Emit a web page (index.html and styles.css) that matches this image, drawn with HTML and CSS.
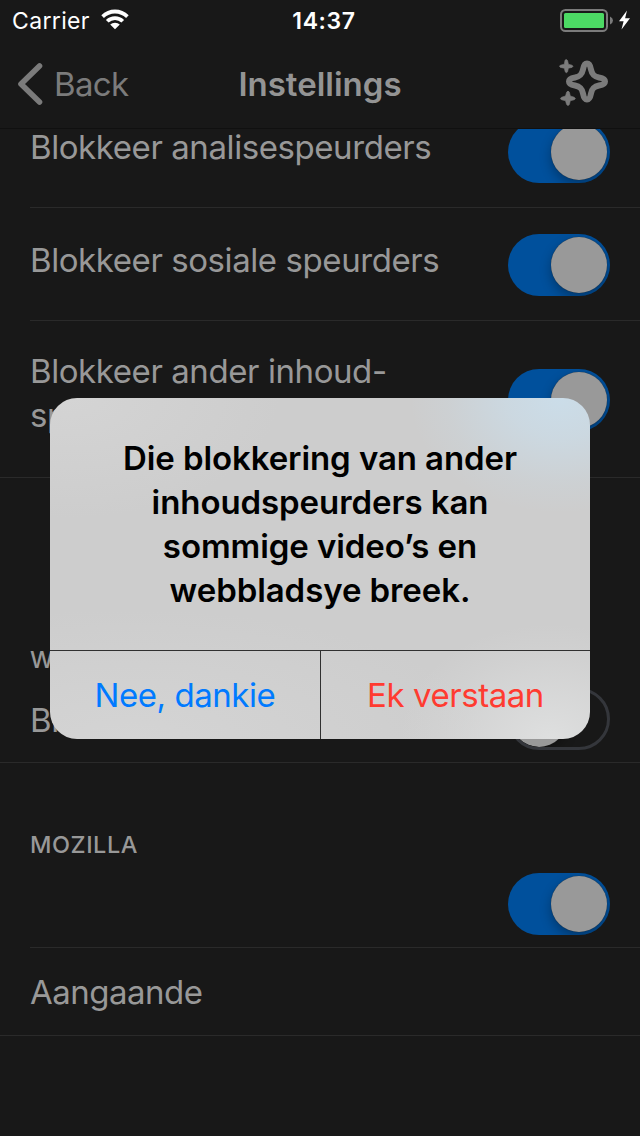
FILE: index.html
```html
<!DOCTYPE html>
<html lang="af">
<head>
<meta charset="utf-8">
<title>Instellings</title>
<link rel="stylesheet" href="styles.css">
</head>
<body>
<div class="screen">
  <div class="status">
    <div class="status-left">
      <span class="carrier">Carrier</span>
      <svg class="wifi" width="28" height="21" viewBox="0 0 28 21">
        <path d="M0.3 6.2A19.6 19.6 0 0 1 27.7 6.2L25.1 8.9A15.9 15.9 0 0 0 2.9 8.9ZM4.9 10.9A13 13 0 0 1 23.1 10.9L20.4 13.6A9.2 9.2 0 0 0 7.6 13.6ZM9.2 15.6A6.9 6.9 0 0 1 18.8 15.6L14 20.3Z" fill="#fff"/>
      </svg>
    </div>
    <span class="time">14:37</span>
    <svg class="battery" width="72" height="24" viewBox="0 0 72 24">
      <rect x="1" y="2" width="46" height="21" rx="4.5" fill="none" stroke="#7b7b7b" stroke-width="2"/>
      <rect x="4" y="5" width="40" height="15" rx="1.5" fill="#4cd964"/>
      <path d="M50 8.5Q53 10 53 12.5T50 16.5Z" fill="#7b7b7b"/>
      <path d="M67 2.5L59 13.2H63.6L61.5 21.5L70 10.2H65.1Z" fill="#fff"/>
    </svg>
  </div>
  <div class="nav">
    <div class="back">
      <svg width="26" height="44" viewBox="0 0 26 44"><path d="M22.500 4L4 22L22.500 40" fill="none" stroke="#7b7b7b" stroke-width="5.600" stroke-linecap="round" stroke-linejoin="round"/></svg>
      <span>Back</span>
    </div>
    <span class="title">Instellings</span>
    <svg class="sparkle" width="50" height="50" viewBox="0 0 50 50">
      <path d="M28 6.500C30.600 6.500 31.300 8.600 32 12.500C33 17.500 35 19.500 40 20.500C44 21.200 46 22 46 24.500S44 27.800 40 28.500C35 29.500 33 31.500 32 36.500C31.300 40.400 30.600 42.500 28 42.500S24.700 40.400 24 36.500C23 31.500 21 29.500 16 28.500C12 27.800 10 27 10 24.500S12 21.200 16 20.500C21 19.500 23 17.500 24 12.500C24.700 8.600 25.400 6.500 28 6.500Z" fill="none" stroke="#7b7b7b" stroke-width="6"/>
      <path d="M6 3.200Q7.500 1.600 8.600 3.600L9.400 7.200L13 8.200Q15 9.300 13 10.400L9.400 11.200L8.600 14.800Q7.400 16.600 6.200 14.800L5.300 11.200L1.400 10.400Q-.5 9.300 1.400 8.200L5.300 7.200Z" fill="#7b7b7b" stroke="#7b7b7b" stroke-width=".6"/>
      <path d="M7.600 35.200Q9 33 10.400 35.200L11.300 39L15.200 40.200Q17.500 41.500 15.200 42.800L11.300 43.700L10.400 47.500Q9 49.700 7.600 47.500L6.500 43.700L2.600 42.800Q.3 41.500 2.600 40.200L6.500 39Z" fill="#7b7b7b" stroke="#7b7b7b" stroke-width=".6"/>
    </svg>
  </div>
  <main class="list">
    <div class="row first inset"><span class="label">Blokkeer analisespeurders</span><span class="switch on"></span></div>
    <div class="row inset"><span class="label">Blokkeer sosiale speurders</span><span class="switch on"></span></div>
    <div class="row tall"><span class="label">Blokkeer ander inhoud-<br>speurders</span><span class="switch on"></span></div>
    <h2 class="heading">WE</h2>
    <div class="row short web"><span class="label">Bl</span><span class="switch off"></span></div>
    <h2 class="heading mozilla">MOZILLA</h2>
    <div class="row short inset send"><span class="switch on"></span></div>
    <div class="row short"><span class="label about">Aangaande</span></div>
  </main>
  <div class="overlay">
    <div class="alert">
      <p class="message">Die blokkering van ander<br>inhoudspeurders kan<br>sommige video’s en<br>webbladsye breek.</p>
      <div class="actions">
        <button class="action cancel">Nee, dankie</button>
        <button class="action confirm">Ek verstaan</button>
      </div>
    </div>
  </div>
</div>
</body>
</html>
```

FILE: styles.css
```css
* { box-sizing: border-box; }
body { margin: 0; background: #181818; font-family: Inter, "Liberation Sans", sans-serif; }
.screen { position: relative; width: 640px; height: 1136px; overflow: hidden; display: flex; flex-direction: column; background: #181818; color: #989898; }
.status { height: 40px; display: grid; grid-template-columns: 1fr auto 1fr; align-items: center; padding: 0 8px 0 12px; color: #fff; flex: none; }
.status-left { display: flex; align-items: center; gap: 11px; height: 40px; }
.carrier { font-size: 23px; line-height: 40px; letter-spacing: .35px; padding-top: 2px; }
.wifi { margin-bottom: 1px; }
.time { font-size: 23px; font-weight: 600; letter-spacing: .6px; margin-left: 4px; padding-top: 2px; }
.battery { justify-self: end; }
.nav { height: 88px; display: grid; grid-template-columns: 1fr auto 1fr; align-items: center; padding: 0 31px 0 17px; flex: none; }
.back { display: flex; align-items: center; gap: 11px; color: #7b7b7b; font-size: 33px; letter-spacing: -.65px; }
.title { font-size: 33px; font-weight: 600; color: #949494; margin-left: 14px; }
.sparkle { justify-self: end; margin-bottom: 4px; }
.list { flex: 1; overflow: hidden; border-top: 1px solid #101010; }
.row { height: 113px; display: flex; align-items: center; justify-content: space-between; padding: 2px 30px 0; border-bottom: 1px solid #2a2a2a; }
.row.first { margin-top: -34px; }
.row.inset { margin-left: 30px; padding-left: 0; }
.row.tall { height: 157px; }
.row.short { height: 88px; padding-top: 0; }
.row.send { justify-content: flex-end; }
.label { font-size: 33px; line-height: 44px; padding-bottom: 11px; font-weight: 400; letter-spacing: -.42px; }
.row.tall .label { padding-bottom: 15px; }
.row.short .label { padding-bottom: 0; }
.row.web .label { padding-top: 3px; }
.label.about { letter-spacing: -.5px; }
.heading { margin: 0; height: 197px; padding: 166px 30px 0; font-size: 23.500px; line-height: 32px; font-weight: 500; letter-spacing: .55px; }
.heading.mozilla { height: 97px; padding-top: 66px; }
.switch { width: 102px; height: 62px; border-radius: 31px; flex: none; display: flex; align-items: center; padding: 0 3px; overflow: hidden; }
.switch::before { content: ""; width: 56px; height: 56px; border-radius: 50%; background: #999; box-shadow: 0 5px 12px rgba(0,0,0,.3), 0 0 1px #333; }
.switch.on { background: #00509c; justify-content: flex-end; }
.switch.off { border: 3px solid #34363b; padding: 0; }
.overlay { position: absolute; inset: 0; display: flex; justify-content: center; align-items: center; }
.alert { width: 540px; height: 341px; border-radius: 27px; overflow: hidden; display: flex; flex-direction: column;
  background: radial-gradient(ellipse 150px 115px at 510px 0, #cbdde9 0, rgba(203,221,233,.7) 35%, rgba(203,221,233,.2) 75%, rgba(203,221,233,0) 100%), radial-gradient(ellipse 150px 115px at 500px 341px, #dedfdf 0, rgba(222,223,223,.2) 75%, rgba(222,223,223,0) 100%), radial-gradient(ellipse 210px 120px at 20px 0, #d4d4d4, rgba(212,212,212,0)), radial-gradient(ellipse 360px 130px at 80px 341px, #d4d4d4, rgba(212,212,212,0)), #cdcdcd; }
.message { margin: 0; height: 252px; padding-top: 38px; text-align: center; font-size: 33px; line-height: 44px; font-weight: 600; letter-spacing: -.08px; color: #000; }
.actions { height: 89px; display: grid; grid-template-columns: 271px 269px; border-top: 1px solid #303030; }
.action { border: 0; background: none; padding: 0; font: 400 33px/44px Inter, "Liberation Sans", sans-serif; letter-spacing: -.45px; color: #007aff; }
.cancel { border-right: 1px solid #303030; }
.confirm { color: #ff3b30; }
```
